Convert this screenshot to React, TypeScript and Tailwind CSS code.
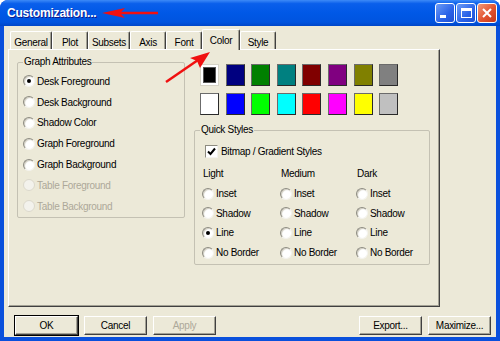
import React from "react";

const swatchRow1 = ["bg-[#000000]", "bg-[#000080]", "bg-[#008000]", "bg-[#008080]", "bg-[#800000]", "bg-[#800080]", "bg-[#808000]", "bg-[#808080]"];
const swatchRow2 = ["bg-[#ffffff]", "bg-[#0000ff]", "bg-[#00ff00]", "bg-[#00ffff]", "bg-[#ff0000]", "bg-[#ff00ff]", "bg-[#ffff00]", "bg-[#c0c0c0]"];

const tabs = [
  { label: "General", w: "w-[42px]" },
  { label: "Plot", w: "w-[36px]" },
  { label: "Subsets", w: "w-[42px]" },
  { label: "Axis", w: "w-[36px]" },
  { label: "Font", w: "w-[36px]" },
  { label: "Color", w: "w-[38px]", active: true },
  { label: "Style", w: "w-[36px]" },
];

const Radio = ({ checked = false, disabled = false }: { checked?: boolean; disabled?: boolean }) => (
  <span
    className={`flex h-[12px] w-[12px] shrink-0 items-center justify-center rounded-full border ${
      disabled
        ? "border-[#dcd9cc] bg-[#f3f2ec]"
        : "border-t-[#8d8b80] border-l-[#8d8b80] border-r-[#f4f3ee] border-b-[#f4f3ee] bg-white shadow-[inset_1px_1px_1px_#cfccbf]"
    }`}
  >
    {checked && <span className="h-[4px] w-[4px] rounded-full bg-black" />}
  </span>
);

const RadioRow = ({ label, checked, disabled, h }: { label: string; checked?: boolean; disabled?: boolean; h: string }) => (
  <div className={`flex items-center gap-[2px] ${h}`}>
    <Radio checked={checked} disabled={disabled} />
    <span className={disabled ? "text-[#aca899]" : "text-black"}>{label}</span>
  </div>
);

const Group = ({ label, className, children }: { label: string; className: string; children?: React.ReactNode }) => (
  <div className={`relative rounded-[2px] border border-[#c4c1b3] ${className}`}>
    <span className="absolute -top-[7px] left-[5px] bg-[#ece9d8] px-[1px] leading-[12px]">{label}</span>
    {children}
  </div>
);

const Btn = ({ label, disabled, def }: { label: string; disabled?: boolean; def?: boolean }) => (
  <button
    className={`h-[19px] w-[63px] border border-t-white border-l-white border-r-[#404040] border-b-[#404040] bg-[#ece9d8] shadow-[inset_-1px_-1px_0_#a3a194] ${
      def ? "outline outline-1 outline-black" : ""
    } ${disabled ? "text-[#aca899]" : "text-black"}`}
  >
    {label}
  </button>
);

const App = () => {
  return (
    <div className="relative flex h-[341px] w-[500px] flex-col overflow-hidden rounded-t-[8px] bg-[#0a50dc] font-['Liberation_Sans',Arial,sans-serif] text-[10px] tracking-[-0.3px]">
      {/* title bar */}
      <div className="flex h-[26px] items-center justify-between bg-[linear-gradient(to_bottom,#3d8af7_0%,#0a5feb_14%,#0058e6_50%,#0054df_85%,#0046c8_100%)] pl-[7px] pr-[3px]">
        <span className="text-[12px] font-bold tracking-[-0.2px] text-white [text-shadow:1px_1px_#0f1a8a]">Customization...</span>
        <div className="flex gap-[1px]">
          <div className="relative h-[20px] w-[20px] rounded-[3px] border border-white bg-[linear-gradient(135deg,#6c9cf6,#2a62e8_60%,#1f50d2)]">
            <span className="absolute bottom-[4px] left-[4px] h-[3px] w-[6px] bg-white" />
          </div>
          <div className="flex h-[20px] w-[20px] items-center justify-center rounded-[3px] border border-white bg-[linear-gradient(135deg,#6c9cf6,#2a62e8_60%,#1f50d2)]">
            <span className="h-[10px] w-[11px] border border-t-[3px] border-white" />
          </div>
          <div className="flex h-[20px] w-[20px] items-center justify-center rounded-[3px] border border-white bg-[linear-gradient(135deg,#f0997a,#e2532f_55%,#c6391b)]">
            <svg width="10" height="10" viewBox="0 0 10 10">
              <path d="M1 1L9 9M9 1L1 9" stroke="white" strokeWidth="2" />
            </svg>
          </div>
        </div>
      </div>

      {/* body */}
      <div className="mx-[4px] mb-[4px] flex flex-1 flex-col bg-[#ece9d8]">
        <div className="ml-[6px] mt-[3px] flex h-[20px] items-end">
          {tabs.map((t) =>
            t.active ? (
              <div
                key={t.label}
                className={`relative z-10 -mb-px flex h-[21px] ${t.w} items-start justify-center rounded-t-[2px] border border-b-0 border-t-white border-l-white border-r-[#404040] bg-[#ece9d8] pt-[3px] shadow-[inset_-1px_0_0_#a3a194]`}
              >
                {t.label}
              </div>
            ) : (
              <div
                key={t.label}
                className={`flex h-[18px] ${t.w} items-start justify-center rounded-t-[2px] border border-b-0 border-t-white border-l-white border-r-[#404040] pt-[3px] shadow-[inset_-1px_0_0_#a3a194]`}
              >
                {t.label}
              </div>
            )
          )}
        </div>

        {/* tab panel */}
        <div className="ml-[4px] flex h-[258px] w-[432px] border border-t-white border-l-white border-r-[#404040] border-b-[#404040] pl-[8px] pt-[12px] shadow-[inset_-1px_-1px_0_#a3a194]">
          <Group label="Graph Attributes" className="h-[156px] w-[168px] pl-[5px] pt-[8px]">
            <RadioRow h="h-[20.8px]" label="Desk Foreground" checked />
            <RadioRow h="h-[20.8px]" label="Desk Background" />
            <RadioRow h="h-[20.8px]" label="Shadow Color" />
            <RadioRow h="h-[20.8px]" label="Graph Foreground" />
            <RadioRow h="h-[20.8px]" label="Graph Background" />
            <RadioRow h="h-[20.8px]" label="Table Foreground" disabled />
            <RadioRow h="h-[20.8px]" label="Table Background" disabled />
          </Group>

          <div className="ml-[9px] flex flex-col">
            <div className="ml-[6px] mt-[2px] flex flex-col gap-[7px]">
              <div className="flex gap-[6.6px]">
                {swatchRow1.map((c, i) =>
                  i === 0 ? (
                    <div key={c} className="h-[22px] w-[19px] border border-[#d6d3c6] bg-white p-[2px]">
                      <div className="h-full w-full border border-[#555] bg-black" />
                    </div>
                  ) : (
                    <div key={c} className={`h-[22px] w-[19px] border border-t-[#6b6b6b] border-l-[#6b6b6b] border-r-[#2a2a2a] border-b-[#2a2a2a] ${c}`} />
                  )
                )}
              </div>
              <div className="flex gap-[6.6px]">
                {swatchRow2.map((c) => (
                  <div key={c} className={`h-[22px] w-[19px] border border-t-[#6b6b6b] border-l-[#6b6b6b] border-r-[#2a2a2a] border-b-[#2a2a2a] ${c}`} />
                ))}
              </div>
            </div>

            <Group label="Quick Styles" className="mt-[15px] h-[135px] w-[236px]">
              <div className="flex h-[15px] items-center gap-[3px] pl-[10px] mt-[13px]">
                <span className="flex h-[13px] w-[13px] items-center justify-center border border-t-[#8d8b80] border-l-[#8d8b80] border-r-[#f4f3ee] border-b-[#f4f3ee] bg-white">
                  <svg width="9" height="9" viewBox="0 0 9 9">
                    <path d="M1 4.5L3.5 7L8 1.5" fill="none" stroke="black" strokeWidth="2" />
                  </svg>
                </span>
                <span>Bitmap / Gradient Styles</span>
              </div>
              <div className="mt-[5px] flex pl-[7px]">
                {[
                  { head: "Light", w: "w-[78px]", line: true },
                  { head: "Medium", w: "w-[76px]" },
                  { head: "Dark", w: "w-[70px]" },
                ].map((col) => (
                  <div key={col.head} className={`flex flex-col ${col.w}`}>
                    <div className="flex h-[19.7px] items-center pl-[1px]">{col.head}</div>
                    <RadioRow h="h-[19.7px]" label="Inset" />
                    <RadioRow h="h-[19.7px]" label="Shadow" />
                    <RadioRow h="h-[19.7px]" label="Line" checked={col.line} />
                    <RadioRow h="h-[19.7px]" label="No Border" />
                  </div>
                ))}
              </div>
            </Group>
          </div>
        </div>

        {/* buttons */}
        <div className="mt-[9px] flex justify-between pl-[11px] pr-[5px]">
          <div className="flex gap-[6px]">
            <Btn label="OK" def />
            <Btn label="Cancel" />
            <Btn label="Apply" disabled />
          </div>
          <div className="flex gap-[6px]">
            <Btn label="Export..." />
            <Btn label="Maximize..." />
          </div>
        </div>
      </div>

      {/* red annotation arrows */}
      <svg className="pointer-events-none absolute left-0 top-0" width="500" height="341" viewBox="0 0 500 341">
        <line x1="158" y1="13" x2="116" y2="13" stroke="#f01010" strokeWidth="2.5" />
        <polygon points="102,13 125,8 120,13 125,18" fill="#f01010" />
        <line x1="166" y1="82" x2="198" y2="60" stroke="#f01010" strokeWidth="2.5" />
        <polygon points="210,52 200,68 197,61 190,58" fill="#f01010" />
      </svg>
    </div>
  );
};

export default App;
